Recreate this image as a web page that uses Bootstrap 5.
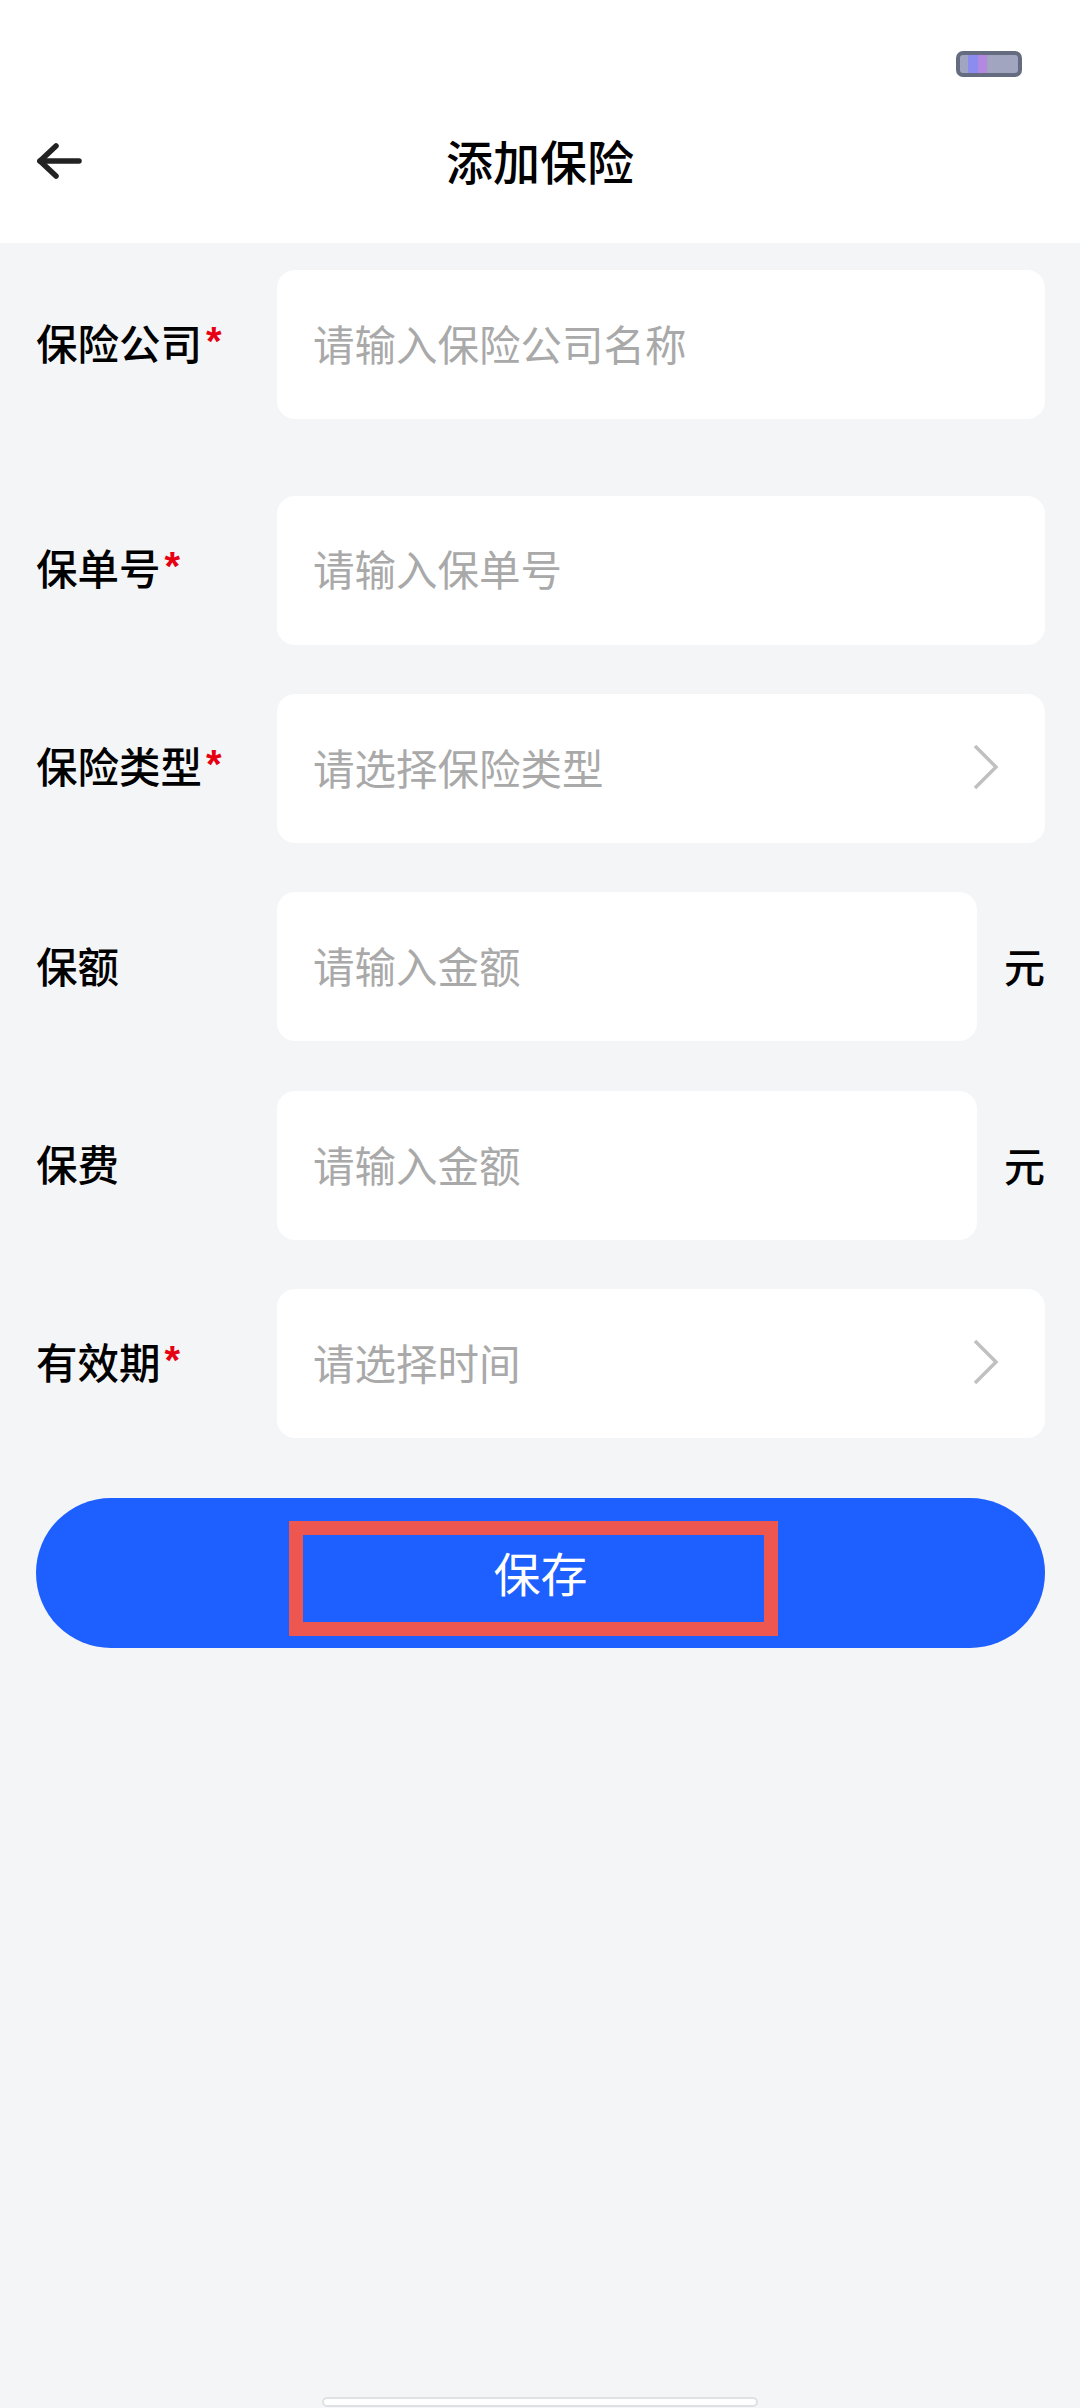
<!doctype html>
<html lang="zh-CN">
<head>
<meta charset="utf-8">
<title>添加保险</title>
<link rel="stylesheet" href="https://cdn.jsdelivr.net/npm/bootstrap@5.3.0/dist/css/bootstrap.min.css">
<style>
html,body{height:2408px;overflow:hidden}
body{background:#f4f5f7;font-family:"Noto Sans CJK SC","Liberation Sans",sans-serif;color:#000}
.app-head{background:#fff;height:243px}
.stat-line{height:51px;padding-right:58px;box-sizing:content-box;padding-top:51px}
.batt{width:66px;height:26px;border:4px solid #666c80;border-radius:7px;background:linear-gradient(90deg,#a1a5c0 0,#a1a5c0 8px,#8c8cf0 8px,#8c8cf0 18px,#b388e0 18px,#b388e0 26px,#a1a5c0 28px)}
.title-line{height:60px;margin-top:29px;padding:0 36px}
.title-txt{font-size:47px;font-weight:500;line-height:60px;position:absolute;left:0;right:0;text-align:center;top:-1px}
.back-ic{width:48px;height:42px;display:block}
.form-area{padding:27px 35px 0 36px}
.f-row{height:149px;margin-bottom:49.4px}
.f-row.first{margin-bottom:76.5px}
.f-label{width:241px;flex:none;font-size:41.5px;font-weight:500;line-height:1;padding-bottom:2px}
.req{color:#e60012;font-family:"Liberation Sans",sans-serif;font-weight:700;font-size:40px;line-height:1;position:relative;top:-5px;margin-left:4px}
.f-box{background:#fff;border-radius:18px;height:149px;padding:0 47px 3px 36px;flex:1 1 0;min-width:0}
.f-box .form-control{border:0;background:transparent;padding:0;font-size:41.5px;height:60px;box-shadow:none;border-radius:0;color:#000}
.f-box .form-control::placeholder{color:#a9a9a9;opacity:1}
.chev{width:25px;height:46px;flex:none;margin-right:0}
.unit{width:68px;flex:none;text-align:right;font-size:41px;font-weight:500;line-height:1;padding-bottom:2px}
.save-btn{height:150px;border-radius:75px;background:#1d5fff;border:0;color:#fff;font-size:47px;width:100%;padding:0 0 2px}
.save-wrap{position:relative;margin-top:60px}
.mark-box{position:absolute;left:253px;top:23px;width:489px;height:115px;border:14px solid #ee5650;pointer-events:none}
.home-pill{position:absolute;left:322px;top:2397px;width:436px;height:10px;background:#fff;border:2px solid #dfe1e5;border-radius:5px}
</style>
</head>
<body class="position-relative">
<header class="app-head">
  <div class="stat-line d-flex justify-content-end align-items-start"><div class="batt"></div></div>
  <div class="title-line d-flex align-items-center position-relative">
    <div class="title-txt">添加保险</div>
    <svg class="back-ic" viewBox="0 0 48 42" fill="none" stroke="#222" stroke-width="5.5" stroke-linecap="round" stroke-linejoin="round"><path d="M43 21H4"/><path d="M20 6 4 21l16 15"/></svg>
  </div>
</header>
<main class="form-area">
  <div class="f-row first d-flex align-items-center">
    <div class="f-label">保险公司<span class="req">*</span></div>
    <div class="f-box d-flex align-items-center"><input class="form-control" placeholder="请输入保险公司名称"></div>
  </div>
  <div class="f-row d-flex align-items-center">
    <div class="f-label">保单号<span class="req">*</span></div>
    <div class="f-box d-flex align-items-center"><input class="form-control" placeholder="请输入保单号"></div>
  </div>
  <div class="f-row d-flex align-items-center">
    <div class="f-label">保险类型<span class="req">*</span></div>
    <div class="f-box d-flex align-items-center"><input class="form-control" placeholder="请选择保险类型">
      <svg class="chev" viewBox="0 0 25 46" fill="none" stroke="#c0c0c0" stroke-width="3.5"><path d="M2 2l21 21L2 44"/></svg></div>
  </div>
  <div class="f-row d-flex align-items-center">
    <div class="f-label">保额</div>
    <div class="f-box d-flex align-items-center"><input class="form-control" placeholder="请输入金额"></div>
    <div class="unit">元</div>
  </div>
  <div class="f-row d-flex align-items-center">
    <div class="f-label">保费</div>
    <div class="f-box d-flex align-items-center"><input class="form-control" placeholder="请输入金额"></div>
    <div class="unit">元</div>
  </div>
  <div class="f-row d-flex align-items-center">
    <div class="f-label">有效期<span class="req">*</span></div>
    <div class="f-box d-flex align-items-center"><input class="form-control" placeholder="请选择时间">
      <svg class="chev" viewBox="0 0 25 46" fill="none" stroke="#c0c0c0" stroke-width="3.5"><path d="M2 2l21 21L2 44"/></svg></div>
  </div>
  <div class="save-wrap">
    <button type="button" class="btn save-btn d-block">保存</button>
    <div class="mark-box"></div>
  </div>
</main>
<div class="home-pill"></div>
<script src="https://cdn.jsdelivr.net/npm/bootstrap@5.3.0/dist/js/bootstrap.bundle.min.js"></script>
</body>
</html>
